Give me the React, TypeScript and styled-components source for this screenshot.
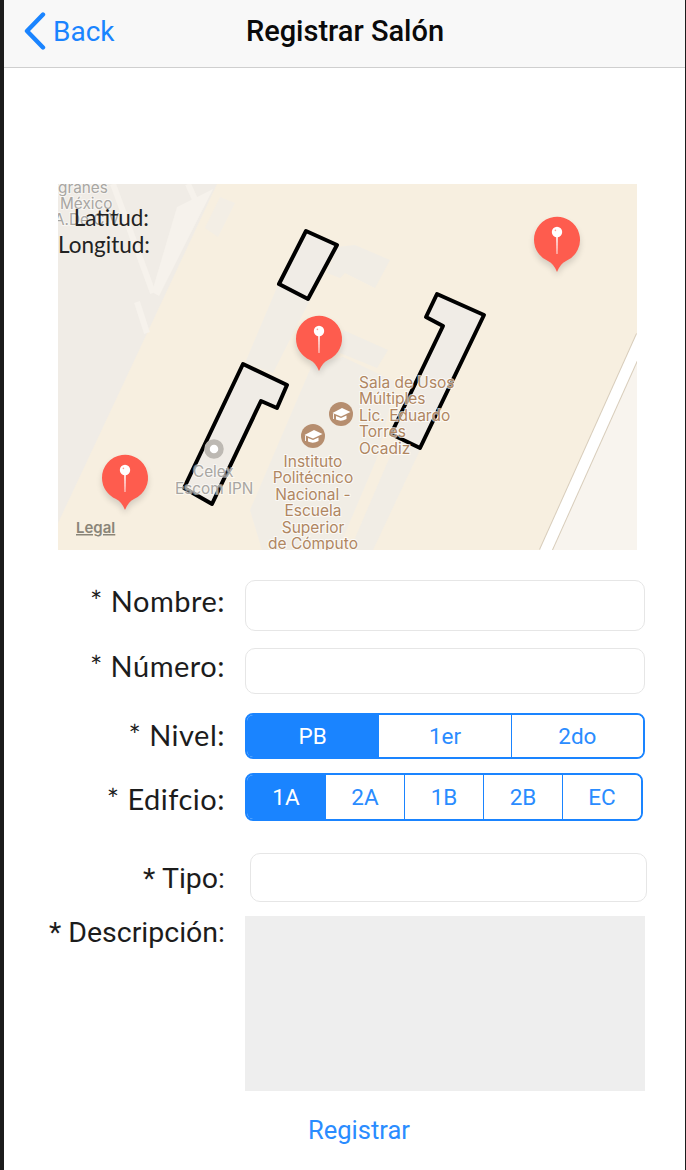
import React from 'react';
import styled, { createGlobalStyle } from 'styled-components';

const GlobalStyle = createGlobalStyle`
    html, body {
        margin: 0;
        padding: 0;
        background: #ffffff;
    }
`;

const Screen = styled.div`
    box-sizing: border-box;
    width: 686px;
    height: 1170px;
    overflow: hidden;
    background: #ffffff;
    border-left: 4px solid #1c1c1c;
    border-right: 1px solid #1c1c1c;
    display: flex;
    flex-direction: column;
    font-family: Inter, "Liberation Sans", sans-serif;
`;

const NavBar = styled.header`
    box-sizing: border-box;
    height: 68px;
    flex: none;
    background: #f8f8f8;
    border-bottom: 1px solid #cfcfcf;
    display: flex;
    align-items: center;
    justify-content: center;
    position: relative;
`;

const BackLink = styled.a`
    position: absolute;
    left: 20px;
    top: 12px;
    display: flex;
    align-items: center;
    gap: 7px;
    color: #1a84ff;
    font-size: 28px;
    font-family: Roboto, sans-serif;
`;

const NavTitle = styled.h1`
    margin: 0 0 5px 1px;
    font-size: 29px;
    font-weight: 500;
    font-family: Roboto, sans-serif;
    color: #0a0a0a;
`;

const MapArea = styled.div`
    position: relative;
    flex: none;
    width: 579px;
    height: 366px;
    margin: 116px 0 0 54px;
    overflow: hidden;
    background: #f7efe0;
`;

const MapDrawing = styled.svg`
    display: block;
    width: 579px;
    height: 366px;
`;

const CoordLabel = styled.div<{ $top: number }>`
    position: absolute;
    top: ${props => props.$top}px;
    left: 0;
    width: 91px;
    text-align: right;
    font-family: Lato, sans-serif;
    font-size: 22.5px;
    line-height: 26px;
    color: #222222;
`;

const Form = styled.form`
    display: flex;
    flex-direction: column;
    padding-top: 30px;
`;

const Row = styled.div<{ $gap: number; $height: number }>`
    display: flex;
    align-items: center;
    height: ${props => props.$height}px;
    margin-bottom: ${props => props.$gap}px;
`;

const Label = styled.label<{ $system?: boolean; $lift?: number }>`
    flex: none;
    width: 221px;
    margin-bottom: ${props => (props.$lift ?? 0) * 2}px;
    text-align: right;
    font-family: ${props => (props.$system ? 'Roboto' : 'Lato')}, sans-serif;
    font-size: ${props => (props.$system ? 28.5 : 29)}px;
    letter-spacing: ${props => (props.$system ? 0 : 0.5)}px;
    color: #1c1c1c;
    white-space: nowrap;
`;

const TextField = styled.input<{ $shift?: number }>`
    box-sizing: border-box;
    width: ${props => 400 - (props.$shift ? 3 : 0)}px;
    height: 100%;
    margin-left: ${props => 20 + (props.$shift ?? 0)}px;
    background: #ffffff;
    border: 1px solid #e6e6e6;
    border-radius: 10px;
    outline: none;
`;

const Segmented = styled.div<{ $width: number }>`
    box-sizing: border-box;
    display: flex;
    width: ${props => props.$width}px;
    height: 100%;
    margin-left: 20px;
    border: 2px solid #1a84ff;
    border-radius: 8px;
    overflow: hidden;
`;

const Segment = styled.div<{ $active?: boolean }>`
    flex: 1;
    display: flex;
    align-items: center;
    justify-content: center;
    font-size: 22.5px;
    font-family: Roboto, sans-serif;
    color: ${props => (props.$active ? '#ffffff' : '#2a8cff')};
    background: ${props => (props.$active ? '#1a84ff' : '#ffffff')};
    & + & {
        border-left: 1.5px solid #1a84ff;
    }
`;

const DescriptionRow = styled.div`
    display: flex;
    align-items: flex-start;
`;

const DescriptionBox = styled.textarea`
    box-sizing: border-box;
    width: 400px;
    height: 175px;
    margin-left: 20px;
    background: #eeeeee;
    border: none;
    outline: none;
    resize: none;
`;

const SubmitButton = styled.button`
    align-self: flex-start;
    width: 400px;
    margin: 24px 0 0 155px;
    padding: 0;
    background: none;
    border: none;
    font-family: Roboto, sans-serif;
    font-size: 25.5px;
    color: #2a8cff;
    text-align: center;
`;

const Pin: React.FC<{ x: number; y: number }> = ({ x, y }) => (
    <g transform={`translate(${x} ${y})`}>
        <path
            d="M-23 2 A23 23 0 1 1 9 22 Q3 25 0 33 Q-3 25 -9 22 A23 23 0 0 1 -23 2Z"
            fill="#000"
            opacity="0.14"
            transform="translate(0 3)"
            filter="url(#soft)"
        />
        <path d="M-23 0 A23 23 0 1 1 9 21 Q3 24 0 32 Q-3 24 -9 21 A23 23 0 0 1 -23 0Z" fill="#fe5c4e" />
        <path d="M-0.9 -8 H0.9 L0.4 14 H-0.4Z" fill="#ffffff" />
        <circle cx="0" cy="-8" r="5.2" fill="#ffffff" />
        <circle cx="-1.6" cy="-9.6" r="0.8" fill="#fe9c92" />
    </g>
);

const SchoolIcon: React.FC<{ x: number; y: number }> = ({ x, y }) => (
    <g transform={`translate(${x} ${y})`}>
        <circle r="12" fill="#b68e6f" />
        <path d="M-8.5 -1 L1 -6 L9.5 -2 L0 2.5Z" fill="#ffffff" />
        <path d="M-5 2 V5.5 Q0 8 5.5 5 V1.5 L0 4Z" fill="#ffffff" />
        <path d="M-7.5 -0.5 V5" stroke="#ffffff" strokeWidth="0.9" />
    </g>
);

const buildings = [
    '306,231 337,245 308,299 279,284',
    '437,294 484,315 420,448 391,434 443,326 426,317',
    '243,364 287,385 277,408 261,401 212,504 184,488',
];

const poiLines: Array<[string, number]> = [
    ['Sala de Usos', 388],
    ['Múltiples', 404],
    ['Lic. Eduardo', 421],
    ['Torres', 437],
    ['Ocadiz', 454],
];

const instituteLines: Array<[string, number]> = [
    ['Instituto', 467],
    ['Politécnico', 483],
    ['Nacional -', 500],
    ['Escuela', 516],
    ['Superior', 533],
    ['de Cómputo', 549],
];

const CampusMap: React.FC = () => (
    <MapDrawing viewBox="58 184 579 366">
        <defs>
            <filter id="soft" x="-30%" y="-30%" width="160%" height="160%">
                <feGaussianBlur stdDeviation="3" />
            </filter>
        </defs>
        {/* grey area on the left and its paths */}
        <polygon points="58,184 217,184 58,523" fill="#f0ece6" />
        <path d="M113 184 L153 293 M188 184 L197 204 M137 302 L147 333" stroke="#f6f2ec" strokeWidth="6" fill="none" />
        <polygon points="177,207 213,189 159,296 152,292" fill="#f6f2ec" />
        <polygon points="220,197 235,203 218,237 205,228" fill="#f3eee5" />
        {/* campus walkways */}
        <polygon points="278,285 310,300 273,373 245,363" fill="#f1ede5" />
        <polygon points="337,247 355,245 390,260 375,288 345,273 340,278 327,273" fill="#f1ede5" />
        <polygon points="343,330 388,350 377,368 340,353" fill="#f1ede5" />
        <polygon points="312,365 343,357 396,382 377,458 338,550 262,550 250,510" fill="#f1ede5" />
        <polygon points="397,440 420,450 373,550 350,550" fill="#f1ede5" />
        {/* road on the right */}
        <polygon points="637,345 637,550 541,550" fill="#f8f4ee" />
        <path d="M642 336 L545 552" stroke="#d8cdbb" strokeWidth="13" fill="none" />
        <path d="M642 336 L545 552" stroke="#ffffff" strokeWidth="11" fill="none" />
        {buildings.map(points => (
            <polygon key={points} points={points} fill="#f0ece6" stroke="#000000" strokeWidth="4" strokeLinejoin="round" />
        ))}
        <circle cx="214" cy="449" r="7" fill="#ffffff" stroke="#bdb9b3" strokeWidth="5.5" />
        <g fontFamily="Inter, sans-serif" fontSize="15.3" fill="#a8a6a2" stroke="#ffffff" strokeOpacity="0.5" strokeWidth="2" paintOrder="stroke">
            <text x="58" y="193">granes</text>
            <text x="60" y="209">México</text>
            <text x="54" y="225">A.De C.V.</text>
            <text x="193" y="477">Celex</text>
            <text x="175" y="494">Escom IPN</text>
        </g>
        <text x="76" y="533" fontFamily="Inter, sans-serif" fontSize="15" fontWeight="600" fill="#8a8578" textDecoration="underline">Legal</text>
        <g fontFamily="Inter, sans-serif" fontSize="15.5" fill="#b08661" stroke="#ffffff" strokeOpacity="0.7" strokeWidth="2" paintOrder="stroke">
            {poiLines.map(([text, y]) => (
                <text key={text} x="359" y={y}>{text}</text>
            ))}
            {instituteLines.map(([text, y]) => (
                <text key={text} x="313" y={y} textAnchor="middle">{text}</text>
            ))}
        </g>
        <SchoolIcon x={341} y={414} />
        <SchoolIcon x={313} y={436} />
        <Pin x={557} y={240} />
        <Pin x={319} y={339} />
        <Pin x={125} y={478} />
    </MapDrawing>
);

export default function App() {
    return (
        <Screen>
            <GlobalStyle />
            <NavBar>
                <BackLink>
                    <svg width="22" height="38" viewBox="0 0 22 38">
                        <path d="M19 2.5 L3 19 L19 35.5" fill="none" stroke="#1a84ff" strokeWidth="4.4" strokeLinecap="round" strokeLinejoin="round" />
                    </svg>
                    Back
                </BackLink>
                <NavTitle>Registrar Salón</NavTitle>
            </NavBar>
            <MapArea>
                <CampusMap />
                <CoordLabel $top={21}>Latitud:</CoordLabel>
                <CoordLabel $top={48}>Longitud:</CoordLabel>
            </MapArea>
            <Form>
                <Row $height={51} $gap={17}>
                    <Label $lift={5}>* Nombre:</Label>
                    <TextField />
                </Row>
                <Row $height={46} $gap={19}>
                    <Label $lift={6}>* Número:</Label>
                    <TextField />
                </Row>
                <Row $height={46} $gap={14}>
                    <Label $lift={2}>* Nivel:</Label>
                    <Segmented $width={400}>
                        <Segment $active>PB</Segment>
                        <Segment>1er</Segment>
                        <Segment>2do</Segment>
                    </Segmented>
                </Row>
                <Row $height={48} $gap={32}>
                    <Label $lift={-1.5}>* Edifcio:</Label>
                    <Segmented $width={398}>
                        <Segment $active>1A</Segment>
                        <Segment>2A</Segment>
                        <Segment>1B</Segment>
                        <Segment>2B</Segment>
                        <Segment>EC</Segment>
                    </Segmented>
                </Row>
                <Row $height={49} $gap={14}>
                    <Label $system $lift={-1}>* Tipo:</Label>
                    <TextField $shift={5} />
                </Row>
                <DescriptionRow>
                    <Label $system>* Descripción:</Label>
                    <DescriptionBox />
                </DescriptionRow>
                <SubmitButton type="button">Registrar</SubmitButton>
            </Form>
        </Screen>
    );
}
